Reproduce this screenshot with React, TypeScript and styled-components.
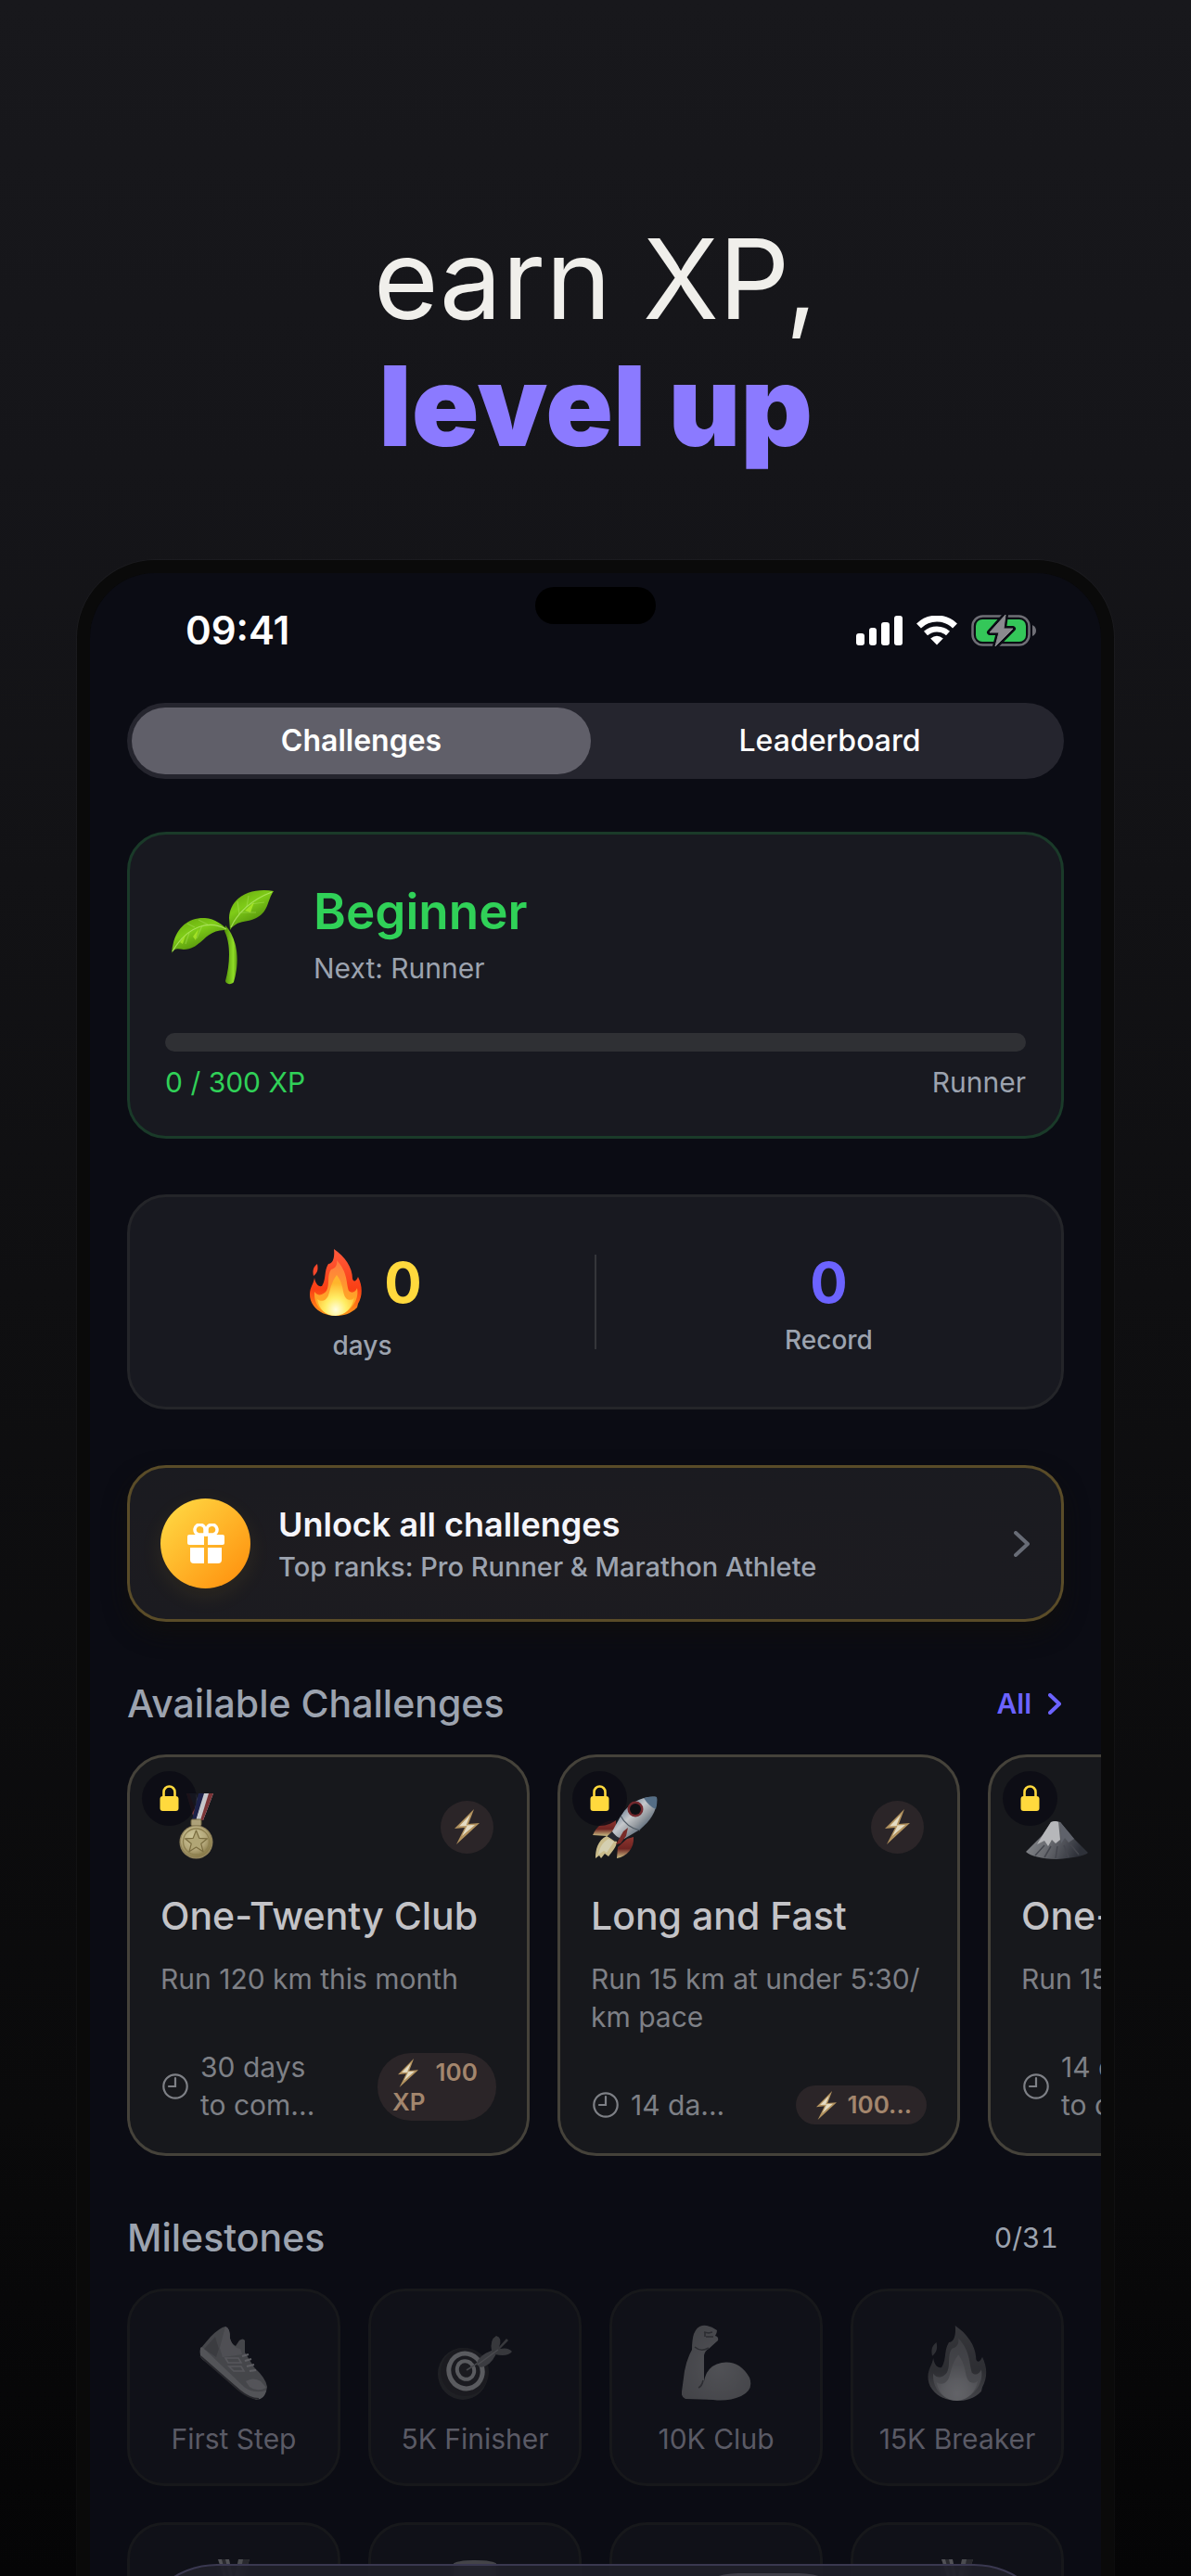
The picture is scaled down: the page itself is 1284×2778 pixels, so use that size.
import React from 'react';
import styled, { createGlobalStyle } from 'styled-components';

const color = {
  screen: '#0b0c14',
  card: '#181920',
  muted: '#9ca3af',
  green: '#30d158',
  yellow: '#ffd93d',
  violet: '#6c63ff',
};

const GlobalStyle = createGlobalStyle`
  *, *::before, *::after { box-sizing: border-box; }
  html, body { margin: 0; background: #050506; }
  body, button { font-family: Inter, "Liberation Sans", sans-serif; }
  h1, h2, h3, p, ul { margin: 0; padding: 0; }
  ul { list-style: none; }
  button { border: 0; padding: 0; background: none; color: inherit; cursor: pointer; text-align: inherit; }
  svg { display: block; flex: none; }
`;

/* ---------- page and device ---------- */

const Page = styled.main`
  height: 100vh;
  overflow: hidden;
  padding: 232px 83px 0;
  background: linear-gradient(#18181c 0%, #151519 18%, #0f0f11 50%, #0a0a0b 82%, #050506 100%);
`;

const Headline = styled.h1`
  display: flex;
  flex-direction: column;
  align-items: center;
  margin-bottom: 98px;
  font-size: 120px;
  line-height: 137px;
  font-weight: 400;
  color: #f0efeb;
`;

const Accent = styled.span`
  font-weight: 900;
  color: #8b7aff;
`;

const Phone = styled.div`
  border: 14px solid #0a0a0a;
  border-radius: 84px;
  background: #0a0a0a;
  box-shadow: 0 0 0 1px rgba(255, 255, 255, 0.03);
`;

const Screen = styled.div`
  position: relative;
  aspect-ratio: 1090 / 2362;
  overflow: hidden;
  border-radius: 70px;
  background: ${color.screen};
`;

const Island = styled.div`
  position: absolute;
  top: 15px;
  left: 50%;
  width: 130px;
  height: 40px;
  margin-left: -65px;
  border-radius: 20px;
  background: #000;
`;

const StatusBar = styled.header`
  display: flex;
  align-items: center;
  justify-content: space-between;
  height: 140px;
  padding: 0 68px 16px 103px;
`;

const Clock = styled.time`
  font-size: 42px;
  line-height: 50px;
  font-weight: 600;
  color: #fff;
`;

const StatusIcons = styled.div`
  display: flex;
  align-items: center;
  gap: 15px;
`;

const Body = styled.div`
  display: flex;
  flex-direction: column;
  padding: 0 40px;
`;

/* ---------- segmented control ---------- */

const Segments = styled.div`
  display: grid;
  grid-template-columns: 1fr 1fr;
  gap: 10px;
  height: 82px;
  padding: 5px;
  margin-bottom: 57px;
  border-radius: 41px;
  background: #25252e;
`;

const Segment = styled.button<{ $active?: boolean }>`
  border-radius: 36px;
  background: ${(p) => (p.$active ? '#605f69' : 'transparent')};
  color: #fff;
  font-size: 32px;
  line-height: 40px;
  font-weight: ${(p) => (p.$active ? 600 : 500)};
  text-align: center;
`;

/* ---------- summary cards ---------- */

const Stack = styled.div`
  display: flex;
  flex-direction: column;
  gap: 60px;
`;

const LevelCard = styled.section`
  padding: 51px 38px 38px;
  border: 3px solid #1a3a29;
  border-radius: 42px;
  background: ${color.card};
`;

const LevelTop = styled.div`
  display: flex;
  align-items: flex-end;
  gap: 36px;
  margin-bottom: 50px;
`;

const IconSlot = styled.span<{ $w: number; $h: number }>`
  display: flex;
  align-items: center;
  justify-content: center;
  flex: none;
  width: ${(p) => p.$w}px;
  height: ${(p) => p.$h}px;
`;

const LevelName = styled.h2`
  margin-bottom: 9px;
  font-size: 53px;
  line-height: 64px;
  font-weight: 600;
  color: ${color.green};
`;

const Note = styled.p<{ $tone?: string }>`
  font-size: 30px;
  line-height: 40px;
  color: ${(p) => p.$tone || color.muted};
`;

const Count = styled(Note)`
  padding-right: 6px;
  font-variant-numeric: tabular-nums;
`;

const Track = styled.div`
  height: 20px;
  margin-bottom: 13px;
  border-radius: 10px;
  background: #2f3034;
  overflow: hidden;
`;

const Fill = styled.div`
  height: 100%;
  background: ${color.green};
`;

const Spread = styled.div`
  display: flex;
  align-items: center;
  justify-content: space-between;
`;

const StatsCard = styled.section`
  display: grid;
  grid-template-columns: 1fr 2px 1fr;
  align-items: center;
  height: 232px;
  border: 3px solid #242529;
  border-radius: 42px;
  background: ${color.card};
`;

const Stat = styled.div`
  display: flex;
  flex-direction: column;
  align-items: center;
  gap: 14px;
  padding-top: 8px;
`;

const StatValue = styled.div<{ $tone: string }>`
  display: flex;
  align-items: center;
  gap: 16px;
  font-size: 60px;
  line-height: 60px;
  font-weight: 700;
  color: ${(p) => p.$tone};
`;

const StatLabel = styled.p`
  font-size: 28px;
  line-height: 36px;
  font-weight: 500;
  color: ${color.muted};
`;

const Divider = styled.div`
  height: 102px;
  background: #34353a;
`;

const Promo = styled.button`
  display: flex;
  align-items: center;
  gap: 30px;
  height: 169px;
  padding: 0 34px 0 33px;
  border: 3px solid #5a4c28;
  border-radius: 42px;
  background: radial-gradient(ellipse at 40% 60%, #1e1c20 0%, #1b1b20 60%, #1a1b20 100%);
  box-shadow: 0 12px 24px rgba(16, 15, 12, 0.8);
`;

const GiftBadge = styled.span`
  display: flex;
  align-items: center;
  justify-content: center;
  flex: none;
  width: 97px;
  height: 97px;
  border-radius: 50%;
  background: linear-gradient(135deg, #ffd541 10%, #ff9410 90%);
  box-shadow: 0 8px 24px rgba(255, 200, 40, 0.08);
`;

const PromoText = styled.span`
  display: flex;
  flex-direction: column;
  flex: 1;
  gap: 6px;
`;

const PromoTitle = styled.strong`
  font-size: 36px;
  line-height: 44px;
  font-weight: 600;
  color: #f5f5fa;
`;

const PromoSub = styled.span`
  font-size: 29px;
  line-height: 36px;
  font-weight: 500;
  color: ${color.muted};
`;

/* ---------- sections ---------- */

const Section = styled.section`
  margin-top: 63px;
`;

const SectionHead = styled(Spread)`
  margin-bottom: 30px;
`;

const SectionTitle = styled.h2`
  font-size: 41px;
  line-height: 50px;
  font-weight: 500;
  color: ${color.muted};
`;

const AllLink = styled.a`
  display: flex;
  align-items: center;
  gap: 18px;
  padding-right: 3px;
  font-size: 30px;
  line-height: 40px;
  font-weight: 600;
  color: ${color.violet};
  text-decoration: none;
`;

const Carousel = styled.div`
  display: flex;
  gap: 30px;
  margin-right: -40px;
  overflow: hidden;
`;

const ChallengeCard = styled.article`
  position: relative;
  display: flex;
  flex: 0 0 434px;
  flex-direction: column;
  height: 433px;
  padding: 39px 33px 31px;
  border: 3px solid #45423a;
  border-radius: 42px;
  background: #17181c;
`;

const LockBadge = styled.span`
  position: absolute;
  top: 15px;
  left: 13px;
  display: flex;
  align-items: center;
  justify-content: center;
  width: 59px;
  height: 59px;
  border-radius: 50%;
  background: rgba(12, 12, 20, 0.86);
`;

const CardTop = styled(Spread)`
  padding-right: 3px;
  margin-bottom: 35px;
`;

const Dimmed = styled.span`
  display: flex;
  align-items: flex-end;
  height: 72px;
  opacity: 0.85;
`;

const BoltBadge = styled.span`
  display: flex;
  align-items: center;
  justify-content: center;
  width: 57px;
  height: 57px;
  border-radius: 50%;
  background: #2b2528;
`;

const CardTitle = styled.h3`
  margin-bottom: 23px;
  font-size: 41px;
  line-height: 50px;
  font-weight: 500;
  white-space: nowrap;
  color: #c3c3c7;
`;

const CardText = styled.p`
  font-size: 30px;
  line-height: 41px;
  color: #7e8086;
  white-space: pre-line;
`;

const CardFoot = styled(Spread)`
  margin-top: auto;
`;

const Deadline = styled.span`
  display: flex;
  align-items: center;
  gap: 13px;
  padding-left: 2px;
  white-space: nowrap;
`;

const Reward = styled.span`
  min-width: 128px;
  padding: 5px 16px;
  border-radius: 36px;
  background: #2b2528;
  font-size: 26px;
  line-height: 31px;
  font-weight: 600;
  color: #a3866d;
  white-space: pre-line;

  svg {
    display: inline-block;
    margin: 0 12px 0 6px;
    vertical-align: -7px;
  }
`;

const MilestoneGrid = styled.ul`
  display: grid;
  grid-template-columns: repeat(4, 1fr);
  gap: 39px 30px;
`;

const Milestone = styled.li`
  display: flex;
  flex-direction: column;
  align-items: center;
  gap: 21px;
  height: 213px;
  padding-top: 37px;
  border: 3px solid #17181b;
  border-radius: 40px;
  background: #101118;
  font-size: 30px;
  line-height: 40px;
  white-space: nowrap;
  color: #5a5a65;
`;

const GreyIcon = styled.span`
  display: flex;
  align-items: flex-end;
  justify-content: center;
  height: 81px;
  filter: grayscale(1);
  opacity: 0.35;
`;

/* ---------- floating tab bar ---------- */

const TabBar = styled.nav`
  position: absolute;
  right: 47px;
  bottom: 35px;
  left: 47px;
  display: grid;
  grid-template-columns: repeat(5, 1fr);
  height: 180px;
  padding: 8px 20px 8px 8px;
  border: 2px solid #3a3850;
  border-radius: 90px;
  background: rgba(32, 32, 42, 0.88);
  backdrop-filter: blur(6px);
`;

const Tab = styled.button<{ $active?: boolean }>`
  margin: 0 -16px;
  border-radius: 80px;
  background: ${(p) => (p.$active ? '#3f3e48' : 'transparent')};
`;

/* ---------- drawings ---------- */

const Chevron = ({ w, h }: { w: number; h: number }) => (
  <svg width={w} height={h} viewBox={`0 0 ${w} ${h}`} fill="none" aria-hidden>
    <path d={`M2 2 L${w - 2} ${h / 2} L2 ${h - 2}`} stroke="currentColor" strokeWidth="4" strokeLinecap="round" strokeLinejoin="round" />
  </svg>
);

const Signal = () => (
  <svg width="50" height="32" viewBox="0 0 50 32" fill="#fff" aria-hidden>
    <rect x="0" y="19" width="9" height="13" rx="3" />
    <rect x="14" y="13" width="8" height="19" rx="3" />
    <rect x="27" y="7" width="9" height="25" rx="3" />
    <rect x="41" y="0" width="9" height="32" rx="3" />
  </svg>
);

const Wifi = () => (
  <svg width="44" height="32" viewBox="0 0 44 32" fill="none" stroke="#fff" strokeWidth="7" aria-hidden>
    <path d="M2.500 11 A28 28 0 0 1 41.500 11" />
    <path d="M10 19 A18 18 0 0 1 34 19" strokeWidth="6" />
    <path d="M22 31.500 L15.200 24.500 Q22 19 28.800 24.500Z" fill="#fff" stroke="none" />
  </svg>
);

const Battery = () => (
  <svg width="72" height="34" viewBox="0 0 72 34" aria-hidden>
    <rect x="1.500" y="1.500" width="61" height="31" rx="11" fill="none" stroke="#6f6f76" strokeWidth="2.500" />
    <rect x="5" y="5" width="54" height="24" rx="7" fill="#34c759" />
    <path d="M66 11 Q70 13 70 17 Q70 21 66 23Z" fill="#6f6f76" />
    <path d="M37 0 L20 19 H30 L26 34 L45 15 H35 Z" fill="#8a8a8f" stroke="#0b0c14" strokeWidth="6" strokeLinejoin="round" />
    <path d="M37 0 L20 19 H30 L26 34 L45 15 H35 Z" fill="#8a8a8f" stroke="#8a8a8f" strokeLinejoin="round" />
  </svg>
);

const Sprout = () => (
  <svg width="112" height="102" viewBox="0 0 112 102" aria-hidden>
    <defs>
      <linearGradient id="leaf" x1="0" y1="0" x2="0.600" y2="1">
        <stop offset="0" stopColor="#62a00c" />
        <stop offset="0.450" stopColor="#7fcc18" />
        <stop offset="1" stopColor="#467f08" />
      </linearGradient>
      <linearGradient id="stem" x1="0" y1="0" x2="1" y2="0">
        <stop offset="0" stopColor="#4f8f08" />
        <stop offset="0.700" stopColor="#8fdc26" />
        <stop offset="1" stopColor="#5c9a10" />
      </linearGradient>
    </defs>
    <path d="M59 38 C70 50 76 72 68 99 C66 102 60 102 59 98 C64 80 65 58 58 44Z" fill="url(#stem)" />
    <path d="M111 1 C90 -3 64 5 63 30 L64 43 C70 33 80 35 90 31 C106 25 104 10 111 1Z" fill="url(#leaf)" />
    <path d="M1 68 C3 42 18 29 37 30 C48 31 56 37 61 43 C36 41 34 64 14 64 C8 63 4 62 1 68Z" fill="url(#leaf)" />
    <g fill="none" stroke="#b4e86a" strokeWidth="1.200" opacity="0.800">
      <path d="M65 40 C72 24 88 10 109 2" />
      <path d="M60 42 C42 32 18 38 2 66" />
      <path d="M74 26 L72 12 M82 18 L84 6 M76 24 L92 24 M86 15 L101 13" opacity="0.500" />
      <path d="M40 37 L30 32 M26 40 L18 36 M34 38 L28 52 M20 46 L16 58" opacity="0.500" />
    </g>
    <path d="M10 56 L16 48 L13 58Z M24 50 L30 42 L27 54Z M80 22 L90 13 L86 24Z" fill="#b5f02c" opacity="0.700" />
  </svg>
);

const Fire = ({ w = 56, h = 72 }: { w?: number; h?: number }) => (
  <svg width={w} height={h} viewBox="0 0 56 72" aria-hidden>
    <defs>
      <linearGradient id="flameOuter" x1="0" y1="0" x2="0" y2="1">
        <stop offset="0" stopColor="#ff5a3c" />
        <stop offset="0.600" stopColor="#fa3f14" />
        <stop offset="1" stopColor="#ff9a1a" />
      </linearGradient>
      <linearGradient id="flameMid" x1="0" y1="0" x2="0" y2="1">
        <stop offset="0" stopColor="#ff7a40" />
        <stop offset="1" stopColor="#ffb71c" />
      </linearGradient>
      <radialGradient id="flameCore" cx="0.500" cy="0.850" r="0.650">
        <stop offset="0" stopColor="#fffde0" />
        <stop offset="0.450" stopColor="#ffee66" />
        <stop offset="1" stopColor="#ffb52c" />
      </radialGradient>
    </defs>
    <path d="M26 0 C38 8 46 20 46 32 C47 36 50 35 52 30 C57 40 57 50 52 59 L51 63 C44 70 36 72 28 72 C18 72 9 68 4 61 C1 57 0 53 0 49 C0 41 4 38 5 31 C6 37 9 41 13 40 C18 32 15 24 20 16 C25 16 27 9 26 0Z" fill="url(#flameOuter)" />
    <path d="M8 16 C3 20 3 24 4 29 C9 25 9 21 8 16Z" fill="#f8472a" />
    <path d="M29 12 C41 25 39 36 42 45 C46 49 50 45 51 42 C54 56 42 71 28 71 C14 71 4 61 5 46 C9 52 15 49 18 45 C22 38 18 28 23 22 C27 21 30 18 29 12Z" fill="url(#flameMid)" />
    <path d="M29 28 C38 40 34 48 40 54 C45 56 47 54 48 52 C46 64 38 71 28 72 C17 72 10 65 8 54 C13 58 18 55 20 50 C22 44 23 36 29 28Z" fill="url(#flameCore)" />
  </svg>
);

const Gift = () => (
  <svg width="42" height="44" viewBox="0 0 42 44" aria-hidden>
    <g fill="none" stroke="#fff" strokeWidth="3.500">
      <path d="M20 12 H13 A5.500 5.500 0 1 1 20 7Z" />
      <path d="M22 12 H29 A5.500 5.500 0 1 0 22 7Z" />
    </g>
    <g fill="#fff">
      <path d="M3 12 H19 V23 H3 Q1 23 1 21 V14 Q1 12 3 12Z" />
      <path d="M23 12 H39 Q41 12 41 14 V21 Q41 23 39 23 H23Z" />
      <path d="M4 26 H19 V43 H8 Q4 43 4 39Z" />
      <path d="M23 26 H38 V39 Q38 43 34 43 H23Z" />
    </g>
  </svg>
);

const Lock = () => (
  <svg width="21" height="29" viewBox="0 0 21 29" aria-hidden>
    <path d="M4.500 13 V7.500 A6 6 0 0 1 16.500 7.500 V13" fill="none" stroke="#ffd93d" strokeWidth="2.600" />
    <rect x="0.500" y="12" width="20" height="16" rx="3" fill="#ffd93d" />
  </svg>
);

const Bolt = ({ w = 27, h = 38 }: { w?: number; h?: number }) => (
  <svg width={w} height={h} viewBox="0 0 27 38" aria-hidden>
    <path d="M21 0 L0 21 L11 20 L2 38 L27 15 L15 16 Z" fill="#b3935f" />
    <path d="M17 6 L5 18.500 L13.500 18 L8 29 L22 17 L12.500 17.500 Z" fill="#e4dcc4" />
  </svg>
);

const ClockFace = () => (
  <svg width="28" height="28" viewBox="0 0 28 28" fill="none" stroke="#7e8086" strokeWidth="2.200" strokeLinecap="round" aria-hidden>
    <circle cx="14" cy="14" r="12.700" />
    <path d="M14 5 V14 H7" />
  </svg>
);

const Medal = ({ w = 57, h = 72 }: { w?: number; h?: number }) => (
  <svg width={w} height={h} viewBox="-20 0 57 72" aria-hidden>
    <defs>
      <radialGradient id="gold" cx="0.400" cy="0.350" r="0.700">
        <stop offset="0" stopColor="#efe6b0" />
        <stop offset="0.600" stopColor="#cfc08a" />
        <stop offset="1" stopColor="#958448" />
      </radialGradient>
    </defs>
    <path d="M8 0 H18 L22 14 L17 30Z" fill="#5d5f72" />
    <path d="M8 0 H11 L20 24 L17 30Z" fill="#8e3a3c" />
    <path d="M21 0 H37 L26 29 H14Z" fill="#20264e" />
    <path d="M26 0 H37 L26 29 H18Z" fill="#e6e6ea" />
    <path d="M32 0 H37 L26 29 H23Z" fill="#8e3a3c" />
    <path d="M22 0 H27 L18 29 H14Z" fill="#1d2250" />
    <rect x="13" y="28" width="11" height="7" rx="1.500" fill="#c8b98a" stroke="#7d7046" strokeWidth="1" />
    <circle cx="18.500" cy="52.500" r="18" fill="#a89766" />
    <circle cx="18.500" cy="52" r="16.500" fill="url(#gold)" />
    <circle cx="18.500" cy="52" r="14" fill="none" stroke="#a3935a" strokeWidth="1.300" />
    <path d="M18.500 40 L21.800 48.300 L30.500 48.800 L23.800 54.300 L26 62.800 L18.500 58 L11 62.800 L13.200 54.300 L6.500 48.800 L15.200 48.300Z" fill="#cdbf86" stroke="#8d7d48" strokeWidth="1.200" strokeLinejoin="round" />
  </svg>
);

const RibbonMedal = () => (
  <svg width="40" height="81" viewBox="0 0 40 81" aria-hidden>
    <path d="M3 0 H15 L22 34 H14Z" fill="#c9c9ce" />
    <path d="M7 0 H11 L19 34 H16Z" fill="#55555a" />
    <path d="M25 0 H37 L26 34 H18Z" fill="#b9b9be" />
    <path d="M30 0 H37 L26 34 H23Z" fill="#55555a" />
    <circle cx="20" cy="58" r="20" fill="#b0b0b5" />
  </svg>
);

const Rocket = () => (
  <svg width="74" height="69" viewBox="-1 0 74 69" aria-hidden>
    <defs>
      <linearGradient id="hull" x1="0.200" y1="0.200" x2="0.800" y2="0.800">
        <stop offset="0" stopColor="#6d87a3" />
        <stop offset="0.400" stopColor="#e4e7ea" />
        <stop offset="0.650" stopColor="#aeb4ba" />
        <stop offset="1" stopColor="#4c6178" />
      </linearGradient>
      <linearGradient id="fin" x1="0" y1="0" x2="0" y2="1">
        <stop offset="0" stopColor="#a33a32" />
        <stop offset="0.550" stopColor="#7e2723" />
        <stop offset="1" stopColor="#ecdc98" />
      </linearGradient>
    </defs>
    <path d="M26 26 C14 26 5 32 1 42 L17 43 L26 36Z" fill="url(#fin)" />
    <path d="M38 46 L28 55 L27 67 C38 65 46 56 45 44Z" fill="url(#fin)" />
    <path d="M16 43 C6 48 4 58 4 67 L8 64 L10 67 L14 62 L18 65 C22 60 27 54 27 49Z" fill="#ead9a0" />
    <path d="M18 46 C11 50 8 57 7 63 L13 59 L16 61 L24 49Z" fill="#f6f0cc" />
    <path d="M22 38 L17 43 L25 49 L31 45Z" fill="#2b2d33" />
    <path d="M70 1 C54 -1 40 8 32 20 L22 38 C25 43 30 46 35 46 L52 36 C64 26 71 15 70 1Z" fill="url(#hull)" />
    <path d="M70 1 C65 0 60 1 56 2 C60 8 64 12 69 14 C70 10 71 5 70 1Z" fill="#5f7c98" />
    <path d="M31 21 C35 29 43 35 52 37" fill="none" stroke="#5a6773" strokeWidth="1.200" />
    <circle cx="47" cy="14" r="8.500" fill="#822b30" />
    <circle cx="47" cy="14" r="6" fill="#0d0e12" />
    <path d="M39 34 L34 38 L26 52 L31 51 L37 43Z" fill="#8b2f2b" />
  </svg>
);

const Mountain = () => (
  <svg width="72" height="42" viewBox="-5 0 72 42" aria-hidden>
    <defs>
      <linearGradient id="rock" x1="0" y1="0" x2="1" y2="0.300">
        <stop offset="0" stopColor="#a4a6aa" />
        <stop offset="0.500" stopColor="#77797f" />
        <stop offset="1" stopColor="#33363f" />
      </linearGradient>
    </defs>
    <path d="M27 1 Q32 -1 37 1 L52 19 L67 34 Q62 39 33 41 Q8 40 0 33 L18 15Z" fill="url(#rock)" />
    <path d="M27 1 Q32 -1 35 1 L37 20 L32 24 L28 20 L24 27 L20 21 L12 25 L18 15Z" fill="#d2d3d6" />
    <path d="M37 1 L52 19 L46 23 L42 18 L38 24Z" fill="#6c7079" />
    <path d="M20 26 L10 37 M27 27 L20 39 M34 27 L32 40 M41 26 L46 39 M48 25 L57 36" stroke="#4d4f57" strokeWidth="1.500" fill="none" />
  </svg>
);

const Shoe = () => (
  <svg width="74" height="81" viewBox="0 0 74 81" aria-hidden>
    <path d="M28 1 Q33 2 33 14 Q34 19 39 22 L43 16 Q47 13 49 16 L49 29 L59 45 Q72 57 73 66 Q72 78 62 80 Q50 76 40 66 L3 36 Q0 33 1 25 L12 12 Q22 2 28 1Z" fill="#a9a9ad" />
    <path d="M1 25 Q1 22 4 24 L48 66 Q58 74 72 70 Q70 79 62 80 Q50 76 40 66 L3 36 Q0 32 1 25Z" fill="#d0d0d4" />
    <path d="M1 33 L42 69 Q54 79 64 79" fill="none" stroke="#55555a" strokeWidth="2" />
    <path d="M28 1 Q33 2 33 14 Q36 24 44 25 L46 31 L25 34 L22 24Z" fill="#c4c4c8" />
    <path d="M5 25 L17 12 L21 25 L18 34Z" fill="#8c8c91" />
    <path d="M50 60 Q58 55 66 60 L72 67 Q62 72 54 66Z" fill="#d2d2d6" />
    <path d="M28 35 H42 L45 40 H31Z M32 44 H45 L48 49 H37Z" fill="none" stroke="#d8d8dc" strokeWidth="1.600" />
    <path d="M46 33 L53 31 M49 38 L56 36 M51 44 L59 42 M54 49 L61 48" stroke="#eeeef0" strokeWidth="2.200" />
  </svg>
);

const Target = () => (
  <svg width="82" height="70" viewBox="0 0 82 70" aria-hidden>
    <ellipse cx="28" cy="41" rx="27" ry="28" fill="#3c3c40" />
    <ellipse cx="30" cy="39" rx="26" ry="26" fill="#303034" />
    <ellipse cx="31" cy="38" rx="18" ry="19" fill="none" stroke="#e4e4e8" strokeWidth="5" transform="rotate(-25 31 38)" />
    <ellipse cx="31" cy="37" rx="9" ry="10" fill="none" stroke="#e4e4e8" strokeWidth="4" transform="rotate(-25 31 37)" />
    <path d="M32 37 L46 28" stroke="#aaaab0" strokeWidth="1.500" />
    <path d="M43 31 Q43 22 61 15 L64 19 Q58 33 47 34Z" fill="#8d8d92" />
    <path d="M59 16 Q57 4 64 0 Q71 2 67 12 L75 3 L77 5 L68 14 Q77 12 81 17 Q76 23 63 20Z" fill="#808086" />
    <path d="M44 31 L66 15" stroke="#b9b9be" strokeWidth="1.200" />
  </svg>
);

const Arm = () => (
  <svg width="75" height="82" viewBox="0 0 75 82" aria-hidden>
    <defs>
      <radialGradient id="skin" cx="0.550" cy="0.550" r="0.650">
        <stop offset="0" stopColor="#c9c9cd" />
        <stop offset="1" stopColor="#a2a2a7" />
      </radialGradient>
    </defs>
    <path d="M22 1 Q30 0 38 6 Q38 9 36 12 Q40 13 39 17 L29 26 Q25 28 24 33 V61 Q27 44 43 41 Q62 38 73 57 Q78 70 64 77 Q50 83 34 81 L4 80 Q-1 78 0 72 L3 50 Q5 38 11 27 Q11 16 13 10 Q16 2 22 1Z" fill="url(#skin)" />
    <path d="M24 8 L29 9 L33 8 M26 13 H34 M25 8 V13 M14 24 Q21 30 29 25 M23 60 Q22 66 18 68" fill="none" stroke="#626267" strokeWidth="1.600" />
  </svg>
);

const Trophy = () => (
  <svg width="66" height="80" viewBox="0 0 66 80" aria-hidden>
    <path d="M10 3 H56 V22 Q54 46 37 50 V64 H50 V78 H16 V64 H29 V50 Q12 46 10 22Z" fill="#6f6f74" />
    <ellipse cx="33" cy="4" rx="23" ry="4" fill="#a4a4a9" />
  </svg>
);

/* ---------- screen ---------- */

const challenges = [
  { title: 'One-Twenty Club', text: 'Run 120 km this month', days: ['30 days', 'to com...'], xp: ' 100\nXP', icon: <Medal /> },
  { title: 'Long and Fast', text: 'Run 15 km at under 5:30/\nkm pace', days: ['14 da...'], xp: '100...', icon: <Rocket /> },
  { title: 'One-', text: 'Run 15', days: ['14 d', 'to c'], xp: '', icon: <Mountain /> },
];

const milestones = [
  { label: 'First Step', icon: <Shoe /> },
  { label: '5K Finisher', icon: <Target /> },
  { label: '10K Club', icon: <Arm /> },
  { label: '15K Breaker', icon: <Fire w={64} h={81} /> },
  { label: '', icon: <RibbonMedal /> },
  { label: '', icon: <Trophy /> },
  { label: '', icon: null },
  { label: '', icon: <RibbonMedal /> },
];

const xp = 0;
const xpGoal = 300;

export default function App() {
  return (
    <>
      <GlobalStyle />
      <Page>
        <Headline>
          <span>earn XP,</span>
          <Accent>level up</Accent>
        </Headline>
        <Phone>
          <Screen>
            <StatusBar>
              <Clock>09:41</Clock>
              <StatusIcons>
                <Signal />
                <Wifi />
                <Battery />
              </StatusIcons>
            </StatusBar>
            <Island />
            <Body>
              <Segments>
                <Segment type="button" $active>Challenges</Segment>
                <Segment type="button">Leaderboard</Segment>
              </Segments>
              <Stack>
                <LevelCard>
                  <LevelTop>
                    <IconSlot $w={124} $h={106}><Sprout /></IconSlot>
                    <div>
                      <LevelName>Beginner</LevelName>
                      <Note>Next: Runner</Note>
                    </div>
                  </LevelTop>
                  <Track>
                    <Fill style={{ width: `${(xp / xpGoal) * 100}%` }} />
                  </Track>
                  <Spread>
                    <Note $tone={color.green}>{xp} / {xpGoal} XP</Note>
                    <Note>Runner</Note>
                  </Spread>
                </LevelCard>
                <StatsCard>
                  <Stat>
                    <StatValue $tone={color.yellow}>
                      <IconSlot $w={72} $h={72}><Fire /></IconSlot>
                      <span>0</span>
                    </StatValue>
                    <StatLabel>days</StatLabel>
                  </Stat>
                  <Divider />
                  <Stat>
                    <StatValue $tone={color.violet}>0</StatValue>
                    <StatLabel>Record</StatLabel>
                  </Stat>
                </StatsCard>
                <Promo type="button">
                  <GiftBadge><Gift /></GiftBadge>
                  <PromoText>
                    <PromoTitle>Unlock all challenges</PromoTitle>
                    <PromoSub>Top ranks: Pro Runner &amp; Marathon Athlete</PromoSub>
                  </PromoText>
                  <Note as="span" $tone="#686c76"><Chevron w={17} h={28} /></Note>
                </Promo>
              </Stack>

              <Section>
                <SectionHead>
                  <SectionTitle>Available Challenges</SectionTitle>
                  <AllLink href="#all">All <Chevron w={14} h={23} /></AllLink>
                </SectionHead>
                <Carousel>
                  {challenges.map((c) => (
                    <ChallengeCard key={c.title}>
                      <CardTop>
                        <Dimmed>{c.icon}</Dimmed>
                        <BoltBadge><Bolt /></BoltBadge>
                      </CardTop>
                      <CardTitle>{c.title}</CardTitle>
                      <CardText>{c.text}</CardText>
                      <CardFoot>
                        <Deadline>
                          <ClockFace />
                          <CardText as="span">{c.days.join('\n')}</CardText>
                        </Deadline>
                        <Reward><Bolt w={22} h={31} />{c.xp}</Reward>
                      </CardFoot>
                      <LockBadge><Lock /></LockBadge>
                    </ChallengeCard>
                  ))}
                </Carousel>
              </Section>

              <Section>
                <SectionHead>
                  <SectionTitle>Milestones</SectionTitle>
                  <Count>0/31</Count>
                </SectionHead>
                <MilestoneGrid>
                  {milestones.map((m, i) => (
                    <Milestone key={i}>
                      <GreyIcon>{m.icon}</GreyIcon>
                      {m.label}
                    </Milestone>
                  ))}
                </MilestoneGrid>
              </Section>
            </Body>
            <TabBar aria-label="Main">
              <Tab type="button" aria-label="Home" />
              <Tab type="button" aria-label="Activity" />
              <Tab type="button" aria-label="Run" />
              <Tab type="button" aria-label="Challenges" $active />
              <Tab type="button" aria-label="Profile" />
            </TabBar>
          </Screen>
        </Phone>
      </Page>
    </>
  );
}
